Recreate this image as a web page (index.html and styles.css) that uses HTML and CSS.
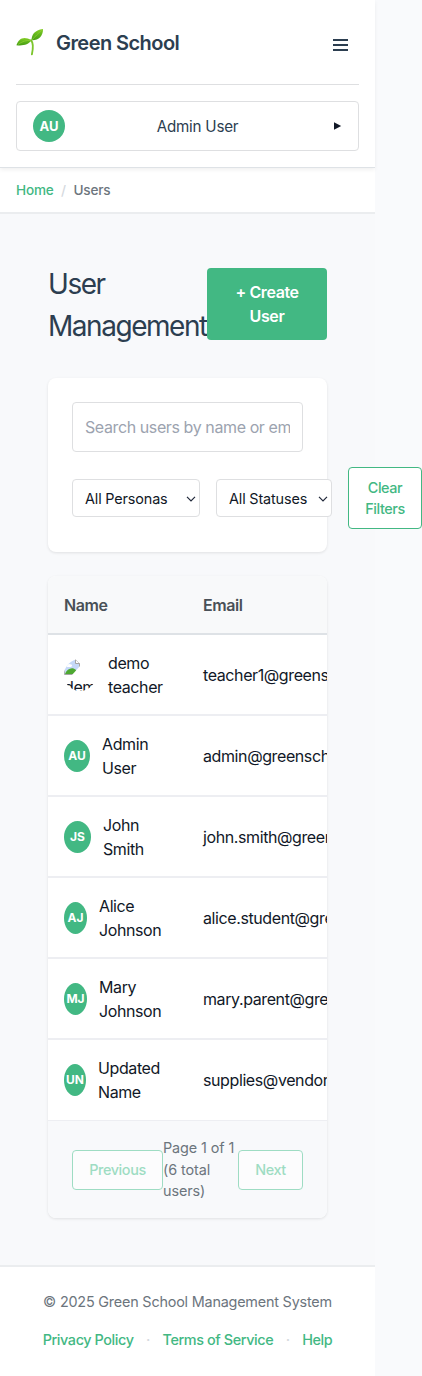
FILE: index.html
```html
<!DOCTYPE html>
<html lang="en">
<head>
<meta charset="utf-8">
<title>Green School</title>
<link rel="stylesheet" href="styles.css">
</head>
<body>
<div class="app">
  <header class="header">
    <div class="brand-row">
      <svg class="logo" viewBox="0 0 28 28" width="28" height="28">
        <defs>
          <linearGradient id="leaf" x1="0" y1="0" x2="0" y2="1"><stop offset="0" stop-color="#87cf27"/><stop offset="0.5" stop-color="#5fb41b"/><stop offset="1" stop-color="#469c13"/></linearGradient>
        </defs>
        <path d="M15 12.2C17.4 15 17.3 20 15.9 26.4" fill="none" stroke="#7cc52c" stroke-width="1.9" stroke-linecap="round"/>
        <path d="M15.6 12.8C15.3 7 18.5 2 27 1C27.2 8 22.5 12.6 15.6 12.2Z" fill="url(#leaf)"/>
        <path d="M.4 17.2C2.6 10.2 8 7.5 15.5 12.3C12.5 16.7 7 18 .4 17.2Z" fill="url(#leaf)"/>
        <path d="M16 12C19 8.5 22 5.5 26 2M2 16.5C6 13.5 10 12 15 12.5" fill="none" stroke="#8fd035" stroke-width=".7"/>
      </svg>
      <span class="brand">Green School</span>
      <span class="menu"><i></i><i></i><i></i></span>
    </div>
    <div class="user-box">
      <span class="avatar avatar-lg">AU</span>
      <span class="user-name">Admin User</span>
      <svg class="caret" width="12" height="8" viewBox="0 0 12 8"><path d="M4 .3L11.2 4L4 7.7Z" fill="#111827"/></svg>
    </div>
  </header>
  <nav class="crumbs"><a>Home</a><span class="slash">/</span><span>Users</span></nav>
  <main class="main">
    <div class="title-row">
      <h1>User Management</h1>
      <button class="create">+ Create<br>User</button>
    </div>
    <section class="filters">
      <div class="search"><span>Search users by name or email...</span></div>
      <div class="filter-row">
        <div class="select personas"><span>All Personas</span><svg width="10" height="6" viewBox="0 0 10 6"><path d="M1 .8L5 4.8L9 .8"/></svg></div>
        <div class="select statuses"><span>All Statuses</span><svg width="10" height="6" viewBox="0 0 10 6"><path d="M1 .8L5 4.8L9 .8"/></svg></div>
        <button class="clear">Clear<br>Filters</button>
      </div>
    </section>
    <section class="users">
      <div class="row head"><div>Name</div><div>Email</div></div>
      <div class="row"><div class="person"><span class="photo"><svg width="16" height="16" viewBox="0 0 16 16"><path d="M.5 .5h11l4 4v11h-15z" fill="#c5d8f8" stroke="#a5a5a5"/><path d="M11.5 .5v4h4" fill="#fff" stroke="#a5a5a5"/><ellipse cx="5" cy="6.5" rx="3" ry="1.5" fill="#fff"/><path d="M1 15C3 10 8 7.5 12 11L14 15Z" fill="#4ea832"/><path d="M8 16L16 7V16Z" fill="#fff"/></svg><em>demo</em></span><span class="name">demo<br>teacher</span></div><div class="mail">teacher1@greenschool.edu</div></div>
      <div class="row"><div class="person"><span class="avatar w26">AU</span><span class="name">Admin<br>User</span></div><div class="mail">admin@greenschool.edu</div></div>
      <div class="row"><div class="person"><span class="avatar w27">JS</span><span class="name">John<br>Smith</span></div><div class="mail">john.smith@greenschool.edu</div></div>
      <div class="row"><div class="person"><span class="avatar w23">AJ</span><span class="name">Alice<br>Johnson</span></div><div class="mail">alice.student@greenschool.edu</div></div>
      <div class="row"><div class="person"><span class="avatar w23">MJ</span><span class="name">Mary<br>Johnson</span></div><div class="mail">mary.parent@greenschool.edu</div></div>
      <div class="row last"><div class="person"><span class="avatar w22">UN</span><span class="name">Updated<br>Name</span></div><div class="mail">supplies@vendor.com</div></div>
      <div class="pager">
        <button class="prev">Previous</button>
        <p>Page 1 of 1<br>(6 total<br>users)</p>
        <button class="next">Next</button>
      </div>
    </section>
  </main>
  <footer class="footer">
    <p>© 2025 Green School Management System</p>
    <div class="links"><a>Privacy Policy</a><i>·</i><a>Terms of Service</a><i>·</i><a>Help</a></div>
  </footer>
</div>
</body>
</html>
```
FILE: styles.css
```css
* { box-sizing: border-box; }
body { margin: 0; background: #f9fafc; color: #111827; font: 16px/24px Inter, "Liberation Sans", sans-serif; letter-spacing: -0.025em; overflow: hidden; }
h1, p { margin: 0; }
button { font: inherit; letter-spacing: inherit; white-space: nowrap; flex: none; padding: 0; }
.app { width: 375px; height: 1376px; background: #f8f9fb; display: flex; flex-direction: column; }
.header { position: relative; height: 168px; padding: 0 16px; background: #fff; border-bottom: 1px solid #dee2e6; box-shadow: 0 2px 4px rgba(0,0,0,.06); flex: none; }
.brand-row { height: 85px; border-bottom: 1px solid #dedfe1; display: flex; align-items: center; color: #2c3e50; }
.logo { margin-right: 12px; }
.brand { font-size: 20px; font-weight: 600; letter-spacing: -0.028em; white-space: nowrap; padding-top: 2px; }
.menu { margin: 5px 11px 0 auto; width: 15px; display: flex; flex-direction: column; gap: 3px; }
.menu i { height: 2px; background: #2c3e50; }
.user-box { margin-top: 16px; height: 50px; border: 1px solid #dedfe1; border-radius: 4px; padding: 0 16px; display: flex; align-items: center; justify-content: space-between; }
.user-name { color: #2c3e50; font-size: 15.2px; letter-spacing: -0.015em; padding-top: 2px; }
.avatar { height: 32px; border-radius: 50%; background: #42b883; color: #fff; font-size: 12px; font-weight: 700; letter-spacing: 0; display: flex; align-items: center; justify-content: center; flex: none; }
.avatar-lg { width: 32px; font-size: 13px; }
.crumbs { height: 46px; padding: 0 16px; background: #fff; border-bottom: 2px solid #ebedef; display: flex; align-items: center; font-size: 13.6px; letter-spacing: -0.015em; color: #6c757d; flex: none; font-weight: 500; }
.crumbs a { color: #42b883; }
.slash { margin: 0 7.5px; color: #d5d9de; }
.main { padding: 48px 48px 0; height: 1051px; }
.title-row { display: flex; align-items: center; height: 84px; margin-bottom: 32px; }
h1 { width: 159px; font-size: 28px; line-height: 42px; font-weight: 400; color: #2c3e50; letter-spacing: -0.052em; flex: none; padding-top: 1px; }
.create { width: 120px; height: 72px; border: 0; border-radius: 4px; background: #42b883; color: #fff; font-weight: 600; margin-top: -1px; }
.filters { height: 174px; padding: 24px; background: #fff; border-radius: 8px; box-shadow: 0 1px 3px rgba(0,0,0,.1); margin-bottom: 24px; }
.search { height: 50px; border: 1px solid #dedfe1; border-radius: 4px; padding: 12px; color: #9ca3af; }
.search span { display: block; white-space: nowrap; overflow: hidden; }
.filter-row { display: flex; align-items: center; gap: 16px; margin-top: 15px; height: 62px; }
.select { height: 38px; flex: none; display: flex; align-items: center; justify-content: space-between; padding: 1px 3px 0 12px; border: 1px solid #dedfe1; border-radius: 4px; background: #fff; font-size: 14.4px; letter-spacing: -0.01em; white-space: nowrap; }
.select svg { fill: none; stroke: #20283a; stroke-width: 1.2; }
.personas { width: 128px; }
.statuses { width: 116px; }
.clear { width: 74px; height: 62px; border: 1px solid #42b883; border-radius: 4px; background: #fff; color: #42b883; font-size: 14.4px; line-height: 21px; font-weight: 500; }
.users { height: 642px; border-radius: 8px; background: #fff; box-shadow: 0 1px 3px rgba(0,0,0,.1); overflow: hidden; }
.row { height: 81px; border-bottom: 2px solid #edeef2; display: grid; grid-template-columns: 139px 240px; align-items: center; }
.row > div { padding-left: 16px; }
.head { height: 59px; background: #f8f9fa; border-bottom: 2px solid #dee2e6; color: #495057; font-weight: 600; padding-top: 1px; }
.last { border-bottom-width: 1px; }
.person { display: flex; align-items: center; gap: 12px; white-space: nowrap; }
.w22 { width: 22px; }
.w23 { width: 23px; }
.w26 { width: 26px; }
.w27 { width: 27px; }
.photo { width: 32px; height: 32px; border-radius: 50%; overflow: hidden; flex: none; }
.photo svg { display: block; }
.photo em { display: block; font-style: normal; line-height: 24px; }
.mail { white-space: nowrap; }
.pager { height: 97px; padding: 0 24px; background: #f8f9fb; display: flex; align-items: center; font-size: 14.4px; line-height: 21.6px; color: #6c757d; }
.pager p { flex: 1; white-space: nowrap; letter-spacing: -0.006em; }
.pager button { height: 40px; background: #fcfcfd; border: 1px solid #9edcc3; color: #9edcc3; border-radius: 4px; font-weight: 500; }
.prev { width: 91px; }
.next { width: 65px; }
.footer { height: 111px; background: #fff; border-top: 2px solid #ebedef; padding-top: 24px; text-align: center; font-size: 14.4px; line-height: 22px; color: #6c757d; }
.footer p { white-space: nowrap; letter-spacing: -0.014em; }
.links { display: flex; justify-content: center; margin-top: 16px; color: #42b883; font-weight: 500; white-space: nowrap; }
.links i { width: 29px; color: #d5d9de; font-style: normal; }
```
